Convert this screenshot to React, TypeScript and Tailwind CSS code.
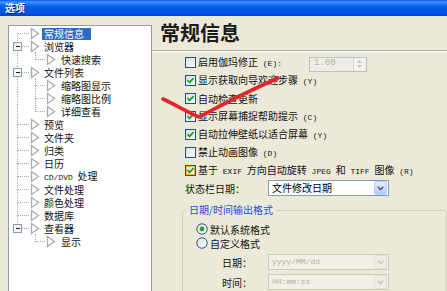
type Node = { t: string; l: 0 | 1; sel?: boolean; kids?: boolean; last?: boolean; end?: boolean; under?: boolean };

const tree: Node[] = [
  { t: '常规信息', l: 0, sel: true },
  { t: '浏览器', l: 0, kids: true },
  { t: '快速搜索', l: 1, end: true },
  { t: '文件列表', l: 0, kids: true },
  { t: '缩略图显示', l: 1 },
  { t: '缩略图比例', l: 1 },
  { t: '详细查看', l: 1, end: true },
  { t: '预览', l: 0 },
  { t: '文件夹', l: 0 },
  { t: '归类', l: 0 },
  { t: '日历', l: 0 },
  { t: 'CD/DVD 处理', l: 0 },
  { t: '文件处理', l: 0 },
  { t: '颜色处理', l: 0 },
  { t: '数据库', l: 0 },
  { t: '查看器', l: 0, kids: true, last: true },
  { t: '显示', l: 1, end: true, under: true },
];

const DOT = '#a9a9a9';

function Lines({ n, first }: { n: Node; first: boolean }) {
  const w = n.l === 0 ? 33 : 50;
  const tx = n.l === 0 ? 22.5 : 38.5;
  return (
    <svg width={w} height={13} className="shrink-0" shapeRendering="crispEdges">
      <g stroke={DOT} strokeDasharray="1 1">
        {n.l === 0 && !first && <line x1={8.5} y1={0} x2={8.5} y2={6.5} />}
        {n.l === 0 && !n.last && <line x1={8.5} y1={6.5} x2={8.5} y2={13} />}
        {n.l === 0 && <line x1={n.kids ? 13 : 9} y1={6.5} x2={21} y2={6.5} />}
        {n.l === 0 && n.kids && <line x1={26.5} y1={12} x2={26.5} y2={13} />}
        {n.l === 1 && !n.under && <line x1={8.5} y1={0} x2={8.5} y2={13} />}
        {n.l === 1 && <line x1={26.5} y1={0} x2={26.5} y2={6.5} />}
        {n.l === 1 && !n.end && <line x1={26.5} y1={6.5} x2={26.5} y2={13} />}
        {n.l === 1 && <line x1={27} y1={6.5} x2={37} y2={6.5} />}
      </g>
      {n.kids && (
        <g>
          <rect x={4.5} y={2.5} width={8} height={8} fill="#f4f4f0" stroke="#8a9bb0" />
          <line x1={6.5} y1={6.5} x2={11} y2={6.5} stroke="#1d1d1d" />
        </g>
      )}
      <polygon
        points={`${tx},1.5 ${tx + 7},6.5 ${tx},11.5`}
        fill="#fff"
        stroke="#adadad"
        strokeWidth={1.4}
        shapeRendering="geometricPrecision"
      />
    </svg>
  );
}

function Mono({ children }: { children: React.ReactNode }) {
  return <span className="font-['Liberation_Mono',monospace] text-[8px]">{children}</span>;
}

function Check({ on, hover }: { on?: boolean; hover?: boolean }) {
  return (
    <span
      className={`w-[11px] h-[11px] shrink-0 border border-[#1c5180] bg-[linear-gradient(135deg,#dcdcd7,#ffffff)] flex items-center justify-center ${
        hover ? 'shadow-[inset_0_0_0_1px_#f8b636]' : ''
      }`}
    >
      {on && (
        <svg width="9" height="9" viewBox="0 0 9 9">
          <path d="M1.5 4.2 L3.6 6.4 L7.5 2.2" fill="none" stroke="#21a121" strokeWidth="1.8" />
        </svg>
      )}
    </span>
  );
}

function Radio({ on }: { on?: boolean }) {
  return (
    <svg width="12" height="12" viewBox="0 0 12 12" className="shrink-0">
      <defs>
        <linearGradient id="rg" x1="0" y1="0" x2="1" y2="1">
          <stop offset="0" stopColor="#dcdcd7" />
          <stop offset="1" stopColor="#ffffff" />
        </linearGradient>
      </defs>
      <circle cx="6" cy="6" r="5.2" fill="url(#rg)" stroke="#2b5a8f" strokeWidth="1" />
      {on && <circle cx="6" cy="6" r="2.4" fill="#22a522" />}
    </svg>
  );
}

function Chevron({ color }: { color: string }) {
  return (
    <svg width="7" height="5" viewBox="0 0 7 5">
      <path d="M0.8 0.8 L3.5 3.6 L6.2 0.8" fill="none" stroke={color} strokeWidth="1.5" />
    </svg>
  );
}

function Select({ value, disabled }: { value: string; disabled?: boolean }) {
  return (
    <div
      className={`w-[121px] h-[16px] border flex items-center ${
        disabled ? 'border-[#cfccbd] bg-[#f2f0e6] text-[#b3ae9e]' : 'border-[#7f9db9] bg-white text-black'
      }`}
    >
      <span className={`flex-1 pl-[3px] leading-[14px] ${disabled ? "font-['Liberation_Mono',monospace] text-[8px]" : 'text-[10px]'}`}>
        {value}
      </span>
      <span
        className={`w-[13px] h-[14px] mr-px rounded-[2px] border flex items-center justify-center ${
          disabled
            ? 'border-[#e1ded2] bg-[#eeece2]'
            : 'border-[#b9cdf8] bg-[linear-gradient(180deg,#e4ecfd,#b6caf9)]'
        }`}
      >
        <Chevron color={disabled ? '#c9c6b8' : '#4d6185'} />
      </span>
    </div>
  );
}

export default function App() {
  return (
    <div className="relative w-[447px] h-[291px] overflow-hidden bg-[#ece9d8] font-['Noto_Sans_CJK_SC','Liberation_Sans',sans-serif] text-[10px] text-[#111]">
      <div className="h-[16px] bg-[linear-gradient(180deg,#0058ee_0%,#3d95ff_12%,#0a5de8_40%,#0053e1_85%,#0040d2_100%)] flex items-center pl-[5px]">
        <span className="text-white text-[10px] font-bold leading-none [text-shadow:1px_1px_0_#0a1e6e]">选项</span>
      </div>

      <div className="flex">
        <div className="pl-[8px] pt-[9px]">
          <div className="w-[144px] h-[275px] border border-[#8c9bad] bg-white pt-px">
            {tree.map((n, i) => (
              <div key={n.t} className="h-[13px] flex items-center">
                <Lines n={n} first={i === 0} />
                <span
                  className={`leading-[12px] whitespace-nowrap ${
                    n.sel ? 'bg-[#316ac5] text-white pl-[2px] pr-[7px]' : 'px-[2px]'
                  }`}
                >
                  {n.t === 'CD/DVD 处理' ? (
                    <>
                      <Mono>CD/DVD </Mono>处理
                    </>
                  ) : (
                    n.t
                  )}
                </span>
              </div>
            ))}
          </div>
        </div>

        <div className="flex-1 flex flex-col">
          <div className="h-[34px] flex items-center pl-[8px] text-[20px] font-bold text-[#1b1b1b] leading-none">
            常规信息
          </div>
          <div className="h-[2px] border-t border-t-[#aca899] border-b border-b-white" />

          <div className="mt-px flex flex-col pl-[33px]">
            <div className="h-[18px] flex items-center gap-[2px]">
              <Check />
              <span className="w-[109px]">
                启用伽玛修正<Mono> (E):</Mono>
              </span>
              <div className="mt-[4px] w-[58px] h-[15px] border border-[#b4c2d6] bg-[#eeece3] flex items-center">
                <span className="flex-1 pl-[4px] font-['Liberation_Mono',monospace] text-[9px] text-[#b6b1a1]">1.00</span>
                <span className="w-[12px] h-[13px] mr-px flex flex-col items-center justify-center gap-[2px] bg-[#f4f3ee] border-l border-[#d9d6ca]">
                  <svg width="5" height="3" viewBox="0 0 5 3"><path d="M0 3 L2.5 0 L5 3Z" fill="#c4c0b2" /></svg>
                  <svg width="5" height="3" viewBox="0 0 5 3"><path d="M0 0 L2.5 3 L5 0Z" fill="#c4c0b2" /></svg>
                </span>
              </div>
            </div>
            <div className="h-[18px] flex items-center gap-[2px]">
              <Check on />
              <span>
                显示获取向导欢迎步骤<Mono> (Y)</Mono>
              </span>
            </div>
            <div className="h-[18px] flex items-center gap-[2px]">
              <Check on />
              <span>自动检查更新</span>
            </div>
            <div className="h-[18px] flex items-center gap-[2px]">
              <Check on />
              <span>
                显示屏幕捕捉帮助提示<Mono> (C)</Mono>
              </span>
            </div>
            <div className="h-[18px] flex items-center gap-[2px]">
              <Check on />
              <span>
                自动拉伸壁纸以适合屏幕<Mono> (Y)</Mono>
              </span>
            </div>
            <div className="h-[18px] flex items-center gap-[2px]">
              <Check />
              <span>
                禁止动画图像<Mono> (D)</Mono>
              </span>
            </div>
            <div className="h-[18px] flex items-center gap-[2px] whitespace-nowrap">
              <Check on hover />
              <span>
                基于<Mono> EXIF </Mono>方向自动旋转<Mono> JPEG </Mono>和<Mono> TIFF </Mono>图像<Mono> (R)</Mono>
              </span>
            </div>
            <div className="h-[18px] flex items-center">
              <span className="w-[83px]">状态栏日期：</span>
              <Select value="文件修改日期" />
            </div>
          </div>

          <fieldset className="ml-[30px] mt-[7px] border border-[#d0d0bf] rounded-[3px] pb-[10px]">
            <legend className="ml-[3px] px-[3px] text-[#1a4fd0] leading-[12px]">日期/时间输出格式</legend>
            <div className="pt-[6px] pl-[13px] flex flex-col">
              <div className="h-[14px] flex items-center gap-[2px]">
                <Radio on />
                <span>默认系统格式</span>
              </div>
              <div className="h-[14px] flex items-center gap-[2px]">
                <Radio />
                <span>自定义格式</span>
              </div>
            </div>
            <div className="mt-[4px] pl-[39px] h-[16px] flex items-center">
              <span className="w-[46px]">日期：</span>
              <Select value="yyyy/MM/dd" disabled />
            </div>
            <div className="mt-[4px] pl-[39px] h-[16px] flex items-center">
              <span className="w-[46px]">时间：</span>
              <Select value="HH:mm:ss" disabled />
            </div>
          </fieldset>
        </div>
      </div>

      <svg className="absolute inset-0 pointer-events-none" width="447" height="291">
        <path
          d="M163 99 C 176 105, 189 113, 199 117 C 214 109, 242 94, 278 78"
          fill="none"
          stroke="#e4262c"
          strokeWidth="3.6"
          strokeLinecap="round"
        />
      </svg>
    </div>
  );
}
